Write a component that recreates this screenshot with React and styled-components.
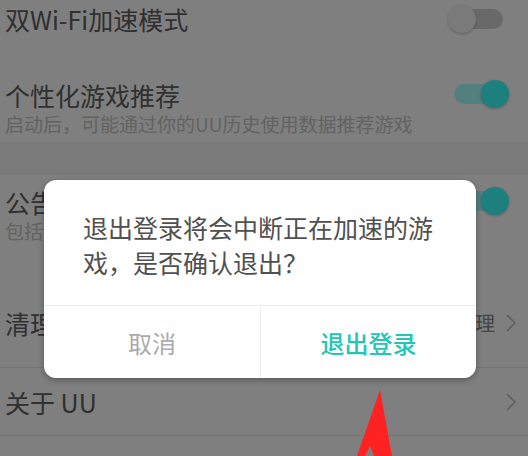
import React from 'react';
import styled, { createGlobalStyle } from 'styled-components';

const GlobalStyle = createGlobalStyle`
  html, body {
    margin: 0;
    padding: 0;
    background: #fff;
    overflow: hidden;
  }
  body {
    font-family: "Noto Sans CJK SC", "Noto Sans", sans-serif;
  }
`

const Screen = styled.div`
  position: relative;
  width: 528px;
  height: 456px;
  overflow: hidden;
  background: #fff;
`

const List = styled.div`
  display: flex;
  flex-direction: column;
`

const Row = styled.div`
  display: flex;
  align-items: ${props => props.align || 'center'};
  justify-content: space-between;
  height: ${props => props.height}px;
  padding: ${props => props.pt || 0}px 11px 0 5px;
  box-sizing: border-box;
  border-bottom: ${props => props.line ? '1px solid #ebebeb' : 'none'};
`

const Gap = styled.div`
  height: ${props => props.height}px;
  background: #f5f5f5;
`

const TextBlock = styled.div`
  display: flex;
  flex-direction: column;
  gap: 3px;
`

const Title = styled.div`
  font-size: 25px;
  line-height: 30px;
  color: #606060;
  white-space: nowrap;
`

const Sub = styled.div`
  font-size: 19px;
  line-height: 22px;
  color: #c4c4c4;
  white-space: nowrap;
`

const Trail = styled.div`
  display: flex;
  align-items: center;
  gap: 10px;
  font-size: 20px;
  color: #8a8a8a;
`

const Toggle = styled.div`
  position: relative;
  width: 61px;
  height: 28px;
  margin-right: 8px;
`

const Track = styled.div`
  position: absolute;
  left: 6px;
  right: 6px;
  top: 4px;
  height: 20px;
  border-radius: 10px;
  background: ${props => props.on ? '#a8ffff' : '#d2d2d2'};
`

const Thumb = styled.div`
  position: absolute;
  top: 0;
  left: ${props => props.on ? 33 : 0}px;
  width: 28px;
  height: 28px;
  border-radius: 50%;
  background: ${props => props.on ? '#3cffff' : '#f4f4f4'};
  box-shadow: 0 1px 3px rgba(0, 0, 0, 0.25);
`

const Scrim = styled.div`
  position: absolute;
  inset: 0;
  background: rgba(0, 0, 0, 0.5);
  display: flex;
  align-items: flex-start;
  padding: 180px 0 0 44px;
`

const Dialog = styled.div`
  width: 432px;
  height: 198px;
  background: #fff;
  border-radius: 12px;
  box-shadow: 0 2px 6px rgba(0, 0, 0, 0.3);
  display: flex;
  flex-direction: column;
  overflow: hidden;
`

const Message = styled.div`
  height: 126px;
  box-sizing: border-box;
  padding: 30px 30px 0 39px;
  font-size: 25px;
  line-height: 35px;
  color: #505050;
  border-bottom: 1px solid #ececec;
`

const Actions = styled.div`
  flex: 1;
  display: grid;
  grid-template-columns: 216px 1fr;
`

const Action = styled.div`
  display: flex;
  align-items: center;
  justify-content: center;
  font-size: 24px;
  font-weight: ${props => props.primary ? 500 : 400};
  color: ${props => props.primary ? '#22c6b6' : '#ababab'};
  border-left: ${props => props.primary ? '1px solid #ececec' : 'none'};
`

const Arrow = styled.svg`
  position: absolute;
  left: 0;
  top: 0;
`

function Switch({ on }) {
  return (
    <Toggle>
      <Track on={on ? 1 : 0} />
      <Thumb on={on ? 1 : 0} />
    </Toggle>
  )
}

function Chevron() {
  return (
    <svg width="12" height="20" viewBox="0 0 12 20">
      <polyline points="2,2 10,10 2,18" fill="none" stroke="#c0c0c0" strokeWidth="1.6" />
    </svg>
  )
}

export default function App() {
  return (
    <Screen>
      <GlobalStyle />
      <List>
        <Row height={38}>
          <Title>双Wi-Fi加速模式</Title>
          <Switch />
        </Row>
        <Row height={104} pt={42} align="flex-start">
          <TextBlock>
            <Title>个性化游戏推荐</Title>
            <Sub>启动后，可能通过你的UU历史使用数据推荐游戏</Sub>
          </TextBlock>
          <Switch on />
        </Row>
        <Gap height={33} />
        <Row height={103} pt={12} align="flex-start">
          <TextBlock>
            <Title>公告通知</Title>
            <Sub>包括活动通知</Sub>
          </TextBlock>
          <Switch on />
        </Row>
        <Row height={90} line>
          <Title>清理缓存</Title>
          <Trail>
            清理
            <Chevron />
          </Trail>
        </Row>
        <Row height={68} line>
          <Title>关于 UU</Title>
          <Trail>
            <Chevron />
          </Trail>
        </Row>
      </List>
      <Scrim>
        <Dialog>
          <Message>退出登录将会中断正在加速的游戏，是否确认退出？</Message>
          <Actions>
            <Action>取消</Action>
            <Action primary>退出登录</Action>
          </Actions>
        </Dialog>
      </Scrim>
      <Arrow width="528" height="456" viewBox="0 0 528 456">
        <polygon points="380,390 392,456 374,456 370,446 365,456 357,456" fill="#ff2222" />
      </Arrow>
    </Screen>
  )
}
